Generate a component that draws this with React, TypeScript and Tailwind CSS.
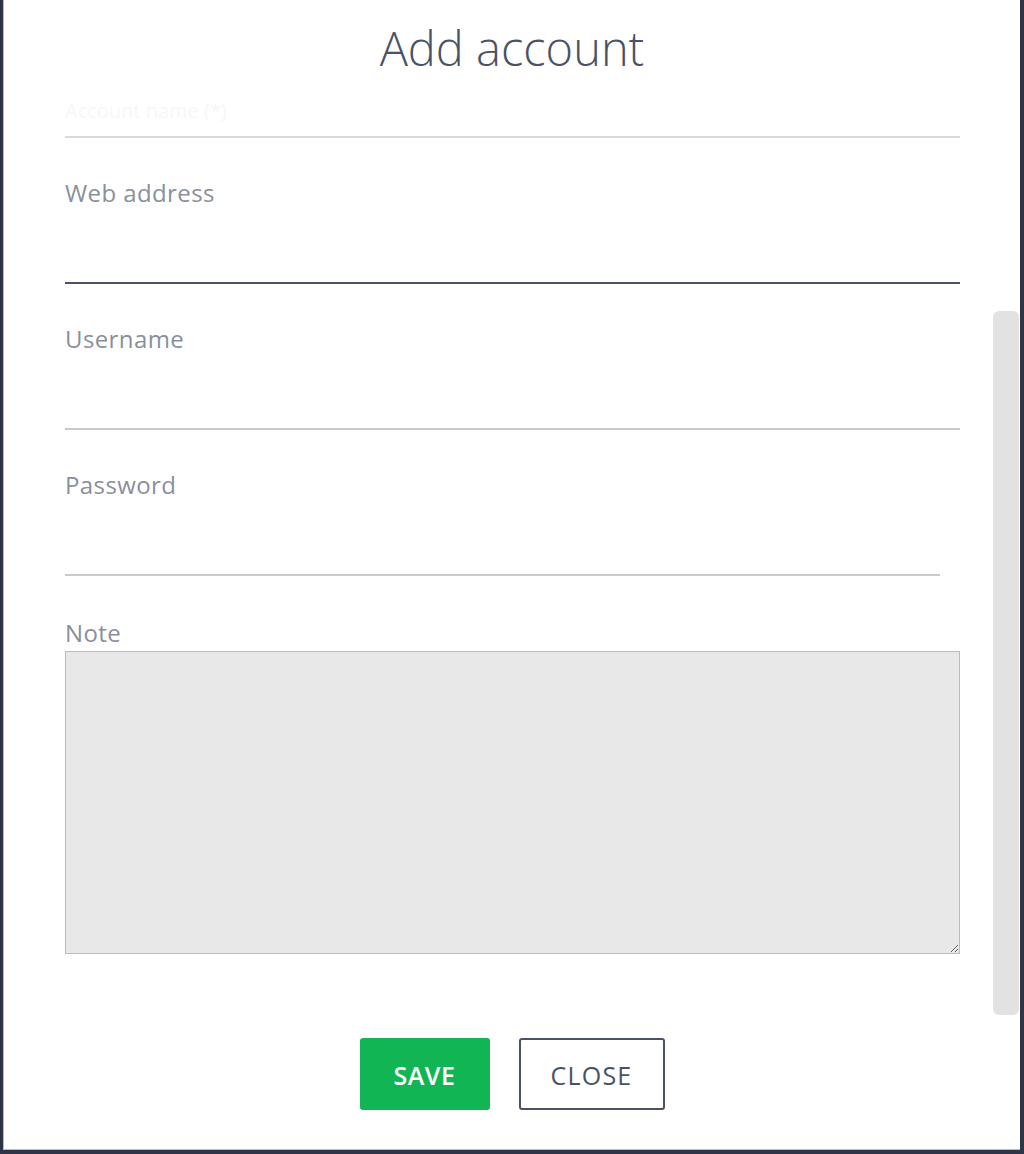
import React from 'react';

interface FieldProps {
  label: string;
  focused?: boolean;
  short?: boolean;
}

function Field({ label, focused, short }: FieldProps) {
  return (
    <div className="pt-[45px]">
      <label className="block text-[24px] leading-5 tracking-[0.4px] text-[#8a8f9b]">{label}</label>
      <div
        className={
          'h-[81px] border-b-2 ' +
          (focused ? 'border-[#4b5266] ' : 'border-[#c9c9c9] ') +
          (short ? 'mr-[20px]' : '')
        }
      />
    </div>
  );
}

export default function App() {
  return (
    <div
      className="h-[1154px] bg-[#2e3548] pl-[3px] pr-[4px] pb-[4px]"
      style={{ fontFamily: '"Open Sans", Lato, sans-serif' }}
    >
      <div className="flex h-full flex-col border-l border-b border-[#b8bdc7] bg-white">
        <div className="flex h-[96px] shrink-0 items-center justify-center">
          <h1 className="text-[47px] font-light leading-none text-[#4b5266]">Add account</h1>
        </div>

        <div className="flex h-[919px] shrink-0">
          <div className="flex-1 pl-[61px] pr-[33px]">
            <div className="h-[42px] border-b-2 border-[#dadada] text-[20px] leading-[30px] text-[#f7f7f7]">
              Account name (*)
            </div>
            <Field label="Web address" focused />
            <Field label="Username" />
            <Field label="Password" short />
            <div className="pt-[47px]">
              <label className="block text-[24px] leading-5 tracking-[0.4px] text-[#8a8f9b]">Note</label>
              <textarea className="mt-2 block h-[303px] w-full resize-y border border-[#bcbcbc] bg-[#e8e8e8] outline-none" />
            </div>
          </div>
          <div className="mr-[1px] w-[26px] pt-[215px]">
            <div className="h-full rounded-md bg-[#e2e2e2]" />
          </div>
        </div>

        <div className="flex justify-center gap-[29px] pt-[23px]">
          <button className="h-[72px] w-[130px] rounded-[3px] bg-[#12b553] pt-[3px] text-[25px] font-semibold tracking-[0.6px] text-white">
            SAVE
          </button>
          <button className="h-[72px] w-[146px] rounded-[3px] border-2 border-[#4b5266] bg-white pt-[3px] text-[25px] tracking-[1.2px] text-[#4b5266]">
            CLOSE
          </button>
        </div>
      </div>
    </div>
  );
}
